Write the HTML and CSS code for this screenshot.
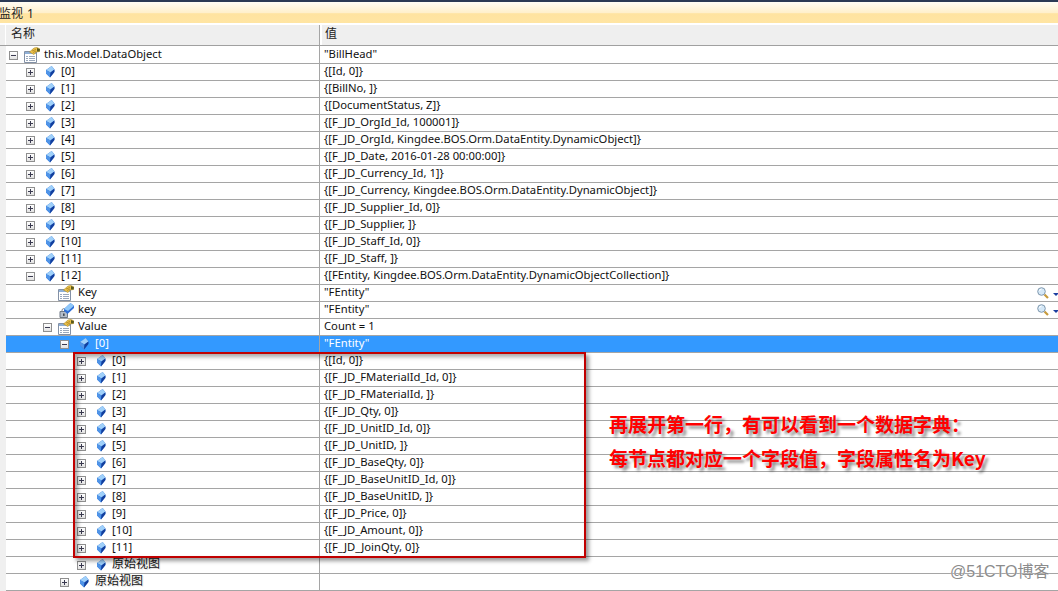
FILE: index.html
```html
<!DOCTYPE html>
<html lang="zh-CN">
<head>
<meta charset="utf-8">
<title>监视 1</title>
<link rel="stylesheet" href="styles.css">
</head>
<body>
<svg class="defs" width="0" height="0" aria-hidden="true">
  <symbol id="field" viewBox="0 0 16 16">
    <path d="M10.7 2 L13.4 5.5 L13.4 8 L9 13.4 L5 9.5 L5 6 Z" fill="#2f6fd0"/>
    <path d="M10.7 2 L13.4 5.5 L9.5 8.5 L5 6 Z" fill="#9fd0fa"/>
    <path d="M5 6 L9.5 8.5 L9 13.2 L5 9.5 Z" fill="#4f94e8"/>
    <path d="M9.5 8.5 L13.4 5.5 L13.4 8 L9 13.4 Z" fill="#123f9e"/>
  </symbol>
  <symbol id="prop" viewBox="0 0 16 16">
    <path d="M0.5 4.5 H12.5 V15.5 H0.5 Z" fill="#fff" stroke="#8391a6"/>
    <path d="M1 5 H12 V7 H1 Z" fill="#8fb0d8"/>
    <path d="M2 9.5 H4 M5 9.5 H11 M2 11.5 H4 M5 11.5 H11 M2 13.5 H4 M5 13.5 H11" stroke="#9aa8bc"/>
    <path d="M5.5 5 L10 1 L13 0.5 L16 2 L15.5 4.5 L12 5 L10 7.5 Z" fill="#efc44a" stroke="#a98a2a" stroke-width=".6"/>
    <path d="M13 1 L16 2.2 L15.6 4.5 L13 4.6 Z" fill="#5a5a1c"/>
    <path d="M8 4 L12 2.5 M9 5.5 L12 4" stroke="#a07a1e" stroke-width=".7"/>
  </symbol>
  <symbol id="keyprop" viewBox="0 0 16 16">
    <path d="M2 9.5 H9.5 V15.5 H2 Z" fill="#b4bdc9" stroke="#6d7785"/>
    <path d="M4 9.5 V8 A1.8 1.8 0 0 1 7.5 8 V9.5" fill="none" stroke="#7a8492"/>
    <rect x="5" y="11.5" width="1.6" height="2.4" fill="#3f4753"/>
    <path d="M12.5 1 L16 3.8 L16 6 L9.5 12 L6 9 L6 7 Z" fill="#2f6fd8"/>
    <path d="M12.5 1 L16 3.8 L10 9 L6 7 Z" fill="#8fc8fa"/>
  </symbol>
  <symbol id="lens" viewBox="0 0 12 12">
    <path d="M7.5 7.5 L11 11" stroke="#c79a3c" stroke-width="2.2"/>
    <circle cx="4.5" cy="4.5" r="3.8" fill="#d5e8f7" stroke="#7f97ad"/>
    <path d="M2.5 4 A2 2 0 0 1 4.5 2.2" fill="none" stroke="#fff"/>
  </symbol>
</svg>

<main class="window">
  <div class="topbar"></div>
  <h1 class="title">监视 1</h1>
  <div class="head">
    <div class="head-gutter"></div>
    <div class="head-cell head-name">名称</div>
    <div class="head-cell head-value">值</div>
  </div>

  <div class="rows">
    <div class="row first"><div class="name l0"><span class="exp minus"></span><svg class="ico"><use href="#prop"/></svg><span>this.Model.DataObject</span></div><div class="val">"BillHead"</div></div>
    <div class="row"><div class="name l1"><span class="exp plus"></span><svg class="ico"><use href="#field"/></svg><span>[0]</span></div><div class="val">{[Id, 0]}</div></div>
    <div class="row"><div class="name l1"><span class="exp plus"></span><svg class="ico"><use href="#field"/></svg><span>[1]</span></div><div class="val">{[BillNo, ]}</div></div>
    <div class="row"><div class="name l1"><span class="exp plus"></span><svg class="ico"><use href="#field"/></svg><span>[2]</span></div><div class="val">{[DocumentStatus, Z]}</div></div>
    <div class="row"><div class="name l1"><span class="exp plus"></span><svg class="ico"><use href="#field"/></svg><span>[3]</span></div><div class="val">{[F_JD_OrgId_Id, 100001]}</div></div>
    <div class="row"><div class="name l1"><span class="exp plus"></span><svg class="ico"><use href="#field"/></svg><span>[4]</span></div><div class="val">{[F_JD_OrgId, Kingdee.BOS.Orm.DataEntity.DynamicObject]}</div></div>
    <div class="row"><div class="name l1"><span class="exp plus"></span><svg class="ico"><use href="#field"/></svg><span>[5]</span></div><div class="val">{[F_JD_Date, 2016-01-28 00:00:00]}</div></div>
    <div class="row"><div class="name l1"><span class="exp plus"></span><svg class="ico"><use href="#field"/></svg><span>[6]</span></div><div class="val">{[F_JD_Currency_Id, 1]}</div></div>
    <div class="row"><div class="name l1"><span class="exp plus"></span><svg class="ico"><use href="#field"/></svg><span>[7]</span></div><div class="val">{[F_JD_Currency, Kingdee.BOS.Orm.DataEntity.DynamicObject]}</div></div>
    <div class="row"><div class="name l1"><span class="exp plus"></span><svg class="ico"><use href="#field"/></svg><span>[8]</span></div><div class="val">{[F_JD_Supplier_Id, 0]}</div></div>
    <div class="row"><div class="name l1"><span class="exp plus"></span><svg class="ico"><use href="#field"/></svg><span>[9]</span></div><div class="val">{[F_JD_Supplier, ]}</div></div>
    <div class="row"><div class="name l1"><span class="exp plus"></span><svg class="ico"><use href="#field"/></svg><span>[10]</span></div><div class="val">{[F_JD_Staff_Id, 0]}</div></div>
    <div class="row"><div class="name l1"><span class="exp plus"></span><svg class="ico"><use href="#field"/></svg><span>[11]</span></div><div class="val">{[F_JD_Staff, ]}</div></div>
    <div class="row"><div class="name l1"><span class="exp minus"></span><svg class="ico"><use href="#field"/></svg><span>[12]</span></div><div class="val">{[FEntity, Kingdee.BOS.Orm.DataEntity.DynamicObjectCollection]}</div></div>
    <div class="row"><div class="name l2"><span class="exp none"></span><svg class="ico"><use href="#prop"/></svg><span>Key</span></div><div class="val"><span>"FEntity"</span><span class="tools"><svg class="lens"><use href="#lens"/></svg><span class="caret"></span></span></div></div>
    <div class="row"><div class="name l2"><span class="exp none"></span><svg class="ico"><use href="#keyprop"/></svg><span>key</span></div><div class="val"><span>"FEntity"</span><span class="tools"><svg class="lens"><use href="#lens"/></svg><span class="caret"></span></span></div></div>
    <div class="row"><div class="name l2"><span class="exp minus"></span><svg class="ico"><use href="#prop"/></svg><span>Value</span></div><div class="val">Count = 1</div></div>
    <div class="row selected"><div class="name l3"><span class="exp minus"></span><svg class="ico"><use href="#field"/></svg><span>[0]</span></div><div class="val">"FEntity"</div></div>
    <div class="row"><div class="name l4"><span class="exp plus"></span><svg class="ico"><use href="#field"/></svg><span>[0]</span></div><div class="val">{[Id, 0]}</div></div>
    <div class="row"><div class="name l4"><span class="exp plus"></span><svg class="ico"><use href="#field"/></svg><span>[1]</span></div><div class="val">{[F_JD_FMaterialId_Id, 0]}</div></div>
    <div class="row"><div class="name l4"><span class="exp plus"></span><svg class="ico"><use href="#field"/></svg><span>[2]</span></div><div class="val">{[F_JD_FMaterialId, ]}</div></div>
    <div class="row"><div class="name l4"><span class="exp plus"></span><svg class="ico"><use href="#field"/></svg><span>[3]</span></div><div class="val">{[F_JD_Qty, 0]}</div></div>
    <div class="row"><div class="name l4"><span class="exp plus"></span><svg class="ico"><use href="#field"/></svg><span>[4]</span></div><div class="val">{[F_JD_UnitID_Id, 0]}</div></div>
    <div class="row"><div class="name l4"><span class="exp plus"></span><svg class="ico"><use href="#field"/></svg><span>[5]</span></div><div class="val">{[F_JD_UnitID, ]}</div></div>
    <div class="row"><div class="name l4"><span class="exp plus"></span><svg class="ico"><use href="#field"/></svg><span>[6]</span></div><div class="val">{[F_JD_BaseQty, 0]}</div></div>
    <div class="row"><div class="name l4"><span class="exp plus"></span><svg class="ico"><use href="#field"/></svg><span>[7]</span></div><div class="val">{[F_JD_BaseUnitID_Id, 0]}</div></div>
    <div class="row"><div class="name l4"><span class="exp plus"></span><svg class="ico"><use href="#field"/></svg><span>[8]</span></div><div class="val">{[F_JD_BaseUnitID, ]}</div></div>
    <div class="row"><div class="name l4"><span class="exp plus"></span><svg class="ico"><use href="#field"/></svg><span>[9]</span></div><div class="val">{[F_JD_Price, 0]}</div></div>
    <div class="row"><div class="name l4"><span class="exp plus"></span><svg class="ico"><use href="#field"/></svg><span>[10]</span></div><div class="val">{[F_JD_Amount, 0]}</div></div>
    <div class="row"><div class="name l4"><span class="exp plus"></span><svg class="ico"><use href="#field"/></svg><span>[11]</span></div><div class="val">{[F_JD_JoinQty, 0]}</div></div>
    <div class="row"><div class="name l4"><span class="exp plus"></span><svg class="ico"><use href="#field"/></svg><span class="cjk">原始视图</span></div><div class="val"></div></div>
    <div class="row"><div class="name l3"><span class="exp plus"></span><svg class="ico"><use href="#field"/></svg><span class="cjk">原始视图</span></div><div class="val"></div></div>
  </div>

  <div class="redbox"></div>
  <div class="note">
    <p>再展开第一行&#xFF0C;有可以看到一个数据字典&#xFF1A;</p>
    <p>每节点都对应一个字段值&#xFF0C;字段属性名为Key</p>
  </div>
  <div class="mark">@51CTO博客</div>
</main>
</body>
</html>
```

FILE: styles.css
```css
* { box-sizing: border-box; }
html, body { margin: 0; padding: 0; background: #fff; }
body {
  width: 1058px;
  height: 591px;
  overflow: hidden;
  font-family: "Noto Sans", "Noto Sans CJK SC", sans-serif;
  font-size: 11.25px;
  color: #111;
}
.defs { position: absolute; }
.window { position: relative; width: 1058px; height: 591px; overflow: hidden; }
.topbar { height: 2px; background: #2b3a55; }
.title {
  margin: 0 0 2px;
  height: 21px;
  text-indent: -1px;
  font-size: 12px;
  font-weight: 400;
  word-spacing: 1px;
  line-height: 23px;
  color: #222;
  background: linear-gradient(#fffdf5 0, #fff0cc 50%, #ffe3a0 56%, #ffe5a3 100%);
}
.head { display: flex; height: 21px; border-bottom: 1px solid #a0a0a0; background: #efefef; font-size: 12px; }
.head-gutter { width: 6px; border-right: 1px solid #fff; }
.head-cell { line-height: 18px; color: #222; }
.head-name { width: 316px; padding-left: 5px; border-right: 2px solid #fff; box-shadow: inset -1px 0 0 #a5a5a5; }
.head-value { flex: 1; padding-left: 3px; }
.rows { padding-left: 6px; background: #f0f0f0; }
.row {
  display: flex;
  height: 17px;
  border-bottom: 1px solid #a5a5a5;
  background: #fff;
  line-height: 14px;
  white-space: nowrap;
}
.row.first { height: 18px; }
.row.selected { background: #3399ff; color: #fff; }
.name {
  display: flex;
  align-items: flex-start;
  width: 314px;
  height: 16px;
  border-right: 1px solid #a5a5a5;
}
.first .name, .first .val { height: 17px; padding-top: 1px; }
.l0 { padding-left: 3px; }
.l1 { padding-left: 20px; }
.l2 { padding-left: 37px; }
.l3 { padding-left: 54px; }
.l4 { padding-left: 71px; }
.cjk { font-size: 12px; text-shadow: 1px 1px 1px rgba(0, 0, 0, .15); }
.exp {
  position: relative;
  flex: none;
  align-self: center;
  width: 9px;
  height: 9px;
  margin-right: 6px;
  border: 1px solid #8f8f8f;
  background: linear-gradient(#fff, #e2e2e2);
}
.exp.none { border: 0; background: none; }
.exp::before {
  content: "";
  position: absolute;
  left: 1px;
  top: 3px;
  width: 5px;
  height: 1px;
  background: #3a3a50;
}
.exp.none::before { display: none; }
.exp.plus::after {
  content: "";
  position: absolute;
  left: 3px;
  top: 1px;
  width: 1px;
  height: 5px;
  background: #3a3a50;
}
.ico { flex: none; align-self: center; width: 16px; height: 16px; margin-right: 4px; }
.val {
  display: flex;
  flex: 1;
  align-items: flex-start;
  height: 16px;
  padding-left: 4px;
  min-width: 0;
  overflow: hidden;
}
.tools { display: flex; align-items: center; align-self: center; margin-left: auto; }
.lens { width: 12px; height: 12px; }
.caret {
  width: 0;
  height: 0;
  margin: 2px -1px 0 4px;
  border-left: 3px solid transparent;
  border-right: 3px solid transparent;
  border-top: 3px solid #1c3fa0;
}
.redbox {
  position: absolute;
  left: 73px;
  top: 352px;
  width: 513px;
  height: 206px;
  border: 2px solid #c00000;
  box-shadow: 3px 3px 4px rgba(0, 0, 0, .4), inset 3px 3px 4px rgba(0, 0, 0, .35);
}
.note {
  position: absolute;
  left: 609px;
  top: 409px;
  font-family: "Noto Sans CJK SC", "Liberation Sans", sans-serif;
  font-size: 19px;
  font-weight: 700;
  color: #f00;
  text-shadow: 3px 3px 3px rgba(0, 0, 0, .45);
}
.note p { margin: 0; height: 34px; line-height: 30px; white-space: nowrap; }
.mark {
  position: absolute;
  left: 950px;
  top: 562px;
  font-family: "Liberation Sans", "Noto Sans CJK SC", sans-serif;
  font-size: 16px;
  line-height: 20px;
  color: #8c8c8c;
  text-shadow: 0 0 1px #fff;
}
```
